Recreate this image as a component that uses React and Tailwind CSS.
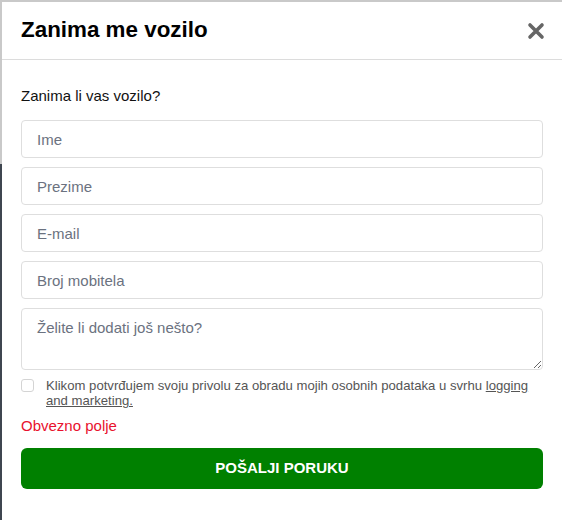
import React from 'react';

const fields = ['Ime', 'Prezime', 'E-mail', 'Broj mobitela'];

export default function App() {
    return (
        <div className="min-h-[520px] w-[562px] flex bg-[#c9c9c9] pt-[2px]" style={{ fontFamily: '"Liberation Sans", Arial, sans-serif' }}>
            <div className="w-[2px] flex flex-col shrink-0">
                <div className="h-[162px] bg-[#c9c9c9]" />
                <div className="flex-1 bg-[#3f4650]" />
            </div>
            <div className="flex-1 bg-white">
                <div className="h-[58px] flex items-center justify-between px-[19px] border-b border-[#dcdcdc]">
                    <h2 className="text-[22.4px] font-bold text-black leading-none">Zanima me vozilo</h2>
                    <button className="text-[#666] mr-[-2px]" aria-label="Zatvori">
                        <svg width="18" height="18" viewBox="0 0 18 18">
                            <path d="M3 3 L15 15 M15 3 L3 15" stroke="#666" strokeWidth="3.6" strokeLinecap="round" />
                        </svg>
                    </button>
                </div>
                <div className="px-[19px] pt-[27px]">
                    <p className="text-[15px] text-[#111] leading-[18px]">Zanima li vas vozilo?</p>
                    <div className="mt-[15px] flex flex-col gap-[9px]">
                        {fields.map((f) => (
                            <input
                                key={f}
                                placeholder={f}
                                className="h-[38px] w-full rounded-[4px] border border-[#dedede] px-[15px] text-[15px] placeholder:text-[#6b7280] outline-none"
                            />
                        ))}
                        <textarea
                            placeholder="Želite li dodati još nešto?"
                            className="h-[62px] w-full rounded-[4px] border border-[#dedede] px-[15px] py-[8px] text-[15px] placeholder:text-[#6b7280] outline-none resize-y"
                        />
                    </div>
                    <label className="mt-[8px] flex items-start gap-[12px]">
                        <span className="mt-[1px] w-[13px] h-[13px] shrink-0 rounded-[3px] border border-[#d4d4d4] bg-white" />
                        <span className="text-[13.15px] leading-[15px] text-[#555]">
                            Klikom potvrđujem svoju privolu za obradu mojih osobnih podataka u svrhu <a className="underline">logging and marketing.</a>
                        </span>
                    </label>
                    <p className="mt-[9px] text-[15px] text-[#e8112d] leading-[18px]">Obvezno polje</p>
                    <button className="mt-[13px] h-[41px] w-full rounded-[6px] bg-[#008000] text-white text-[15px] font-bold">
                        POŠALJI PORUKU
                    </button>
                </div>
            </div>
        </div>
    );
}
